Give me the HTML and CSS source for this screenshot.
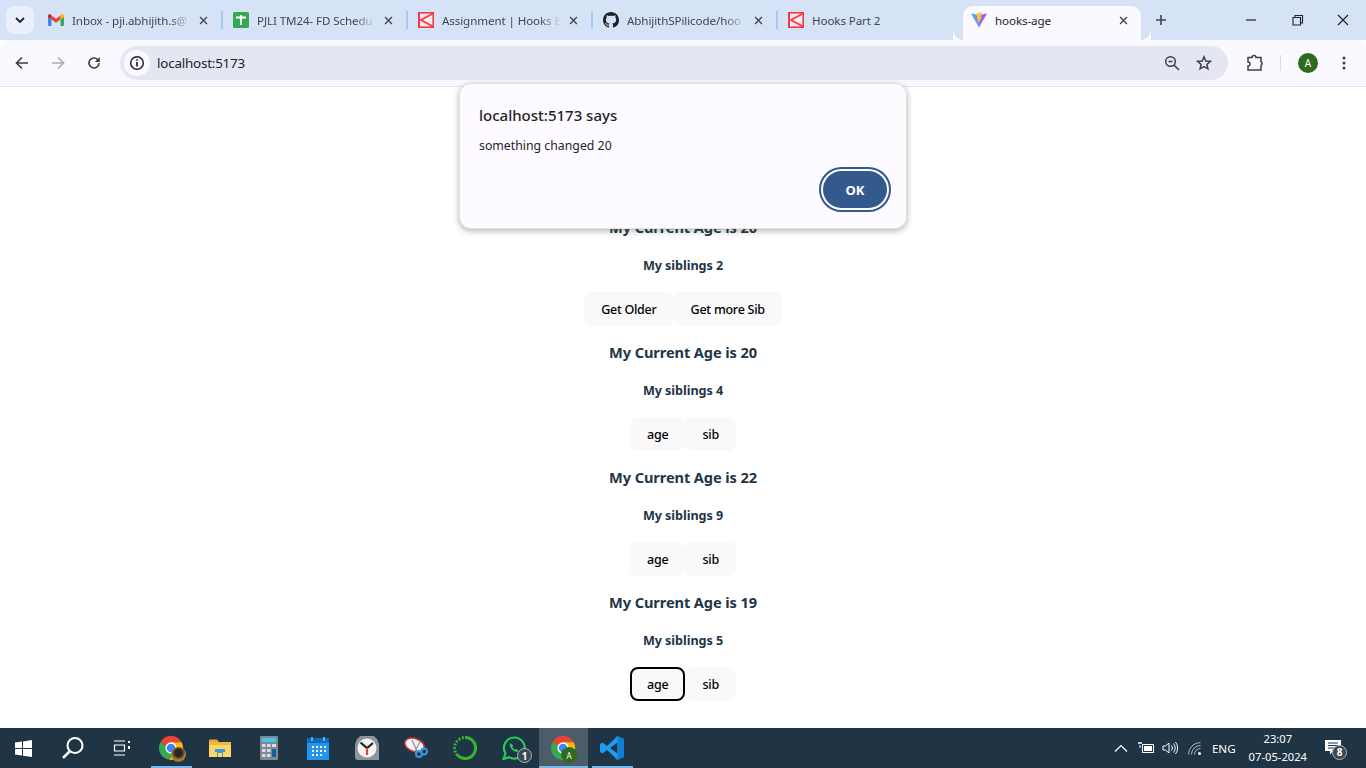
FILE: index.html
```html
<!DOCTYPE html>
<html lang="en">
<head>
<meta charset="utf-8">
<title>hooks-age</title>
<link rel="stylesheet" href="styles.css">
</head>
<body>
<svg class="defs" width="0" height="0" aria-hidden="true">
  <defs>
    <linearGradient id="vitefill" x1="0" y1="0" x2="1" y2="0">
      <stop offset="0" stop-color="#41b8ff"/>
      <stop offset="0.55" stop-color="#8f7cf5"/>
      <stop offset="1" stop-color="#bd34fe"/>
    </linearGradient>
    <symbol id="kicon" viewBox="0 0 16 16">
      <rect x="0.8" y="0.8" width="14.4" height="14.4" fill="#fdeaec" stroke="#f0394a" stroke-width="1.6"/>
      <path d="M15 1.5 3 8l12 6.5" fill="none" stroke="#f0394a" stroke-width="1.8"/>
      <path d="M1 1v14" stroke="#f0394a" stroke-width="2"/>
    </symbol>
    <symbol id="close" viewBox="0 0 10 10">
      <path d="M1.2 1.2l7.6 7.6M8.8 1.2 1.2 8.8" fill="none" stroke="#3f4650" stroke-width="1.5"/>
    </symbol>
    <symbol id="chrome" viewBox="0 0 24 24">
      <path d="M12 12 2.2 6.8A11 11 0 0 1 21.8 6.8H12z" fill="#ea4335"/>
      <path d="M2.2 6.8A11 11 0 0 0 10.5 22.9L15.5 14 12 12z" fill="#34a853"/>
      <path d="M21.8 6.8A11 11 0 0 1 10.5 22.9L15.5 14 12 6.8z" fill="#fbbc05"/>
      <circle cx="12" cy="12" r="5.2" fill="#fff"/>
      <circle cx="12" cy="12" r="4" fill="#4285f4"/>
    </symbol>
  </defs>
</svg>

<header class="tabstrip">
  <button class="tabsearch" type="button" aria-label="Search tabs">
    <svg width="10" height="6" viewBox="0 0 10 6"><path d="M1 1l4 4 4-4" fill="none" stroke="#1f2328" stroke-width="1.8"/></svg>
  </button>
  <div class="tabs">
    <div class="tab">
      <svg class="fav" viewBox="0 0 16 12"><path d="M3.500 5.500V12H1a1 1 0 0 1-1-1V2.500z" fill="#4285f4"/><path d="M12.500 5.500V12H15a1 1 0 0 0 1-1V2.500z" fill="#34a853"/><path d="M12.500 1.500V5.500L16 3V2c0-1.500-1.700-2.200-2.800-1.300z" fill="#fbbc05"/><path d="M3.500 5.500V1.500L8 4.800l4.500-3.300v4L8 8.800z" fill="#ea4335"/><path d="M0 3V2C0 .5 1.700-.2 2.800.7l.7.800v4z" fill="#c5221f"/></svg>
      <span class="tab-title">Inbox - pji.abhijith.s@</span>
      <svg class="tab-close"><use href="#close"/></svg>
    </div>
    <div class="tab">
      <svg class="fav" viewBox="0 0 16 16"><rect width="16" height="16" rx="1.500" fill="#34a853"/><path d="M3 5.500h10M8 3v10" stroke="#fff" stroke-width="1.800" fill="none"/></svg>
      <span class="tab-title">PJLI TM24- FD Schedu</span>
      <svg class="tab-close"><use href="#close"/></svg>
    </div>
    <div class="tab">
      <svg class="fav"><use href="#kicon"/></svg>
      <span class="tab-title">Assignment | Hooks B</span>
      <svg class="tab-close"><use href="#close"/></svg>
    </div>
    <div class="tab">
      <svg class="fav" viewBox="0 0 16 16"><path fill="#1f2328" d="M8 0C3.580 0 0 3.580 0 8c0 3.540 2.290 6.530 5.470 7.590.4.070.55-.17.55-.38 0-.19-.01-.82-.01-1.490-2.010.37-2.530-.49-2.690-.94-.09-.23-.48-.94-.82-1.130-.28-.15-.68-.52-.01-.53.630-.01 1.080.58 1.230.82.720 1.210 1.870.87 2.330.66.070-.52.280-.87.510-1.070-1.780-.2-3.640-.89-3.640-3.950 0-.87.310-1.590.820-2.150-.08-.2-.36-1.020.08-2.120 0 0 .67-.21 2.200.82.640-.18 1.320-.27 2-.27s1.360.09 2 .27c1.530-1.040 2.200-.82 2.200-.82.440 1.100.16 1.920.08 2.120.51.560.82 1.270.82 2.150 0 3.070-1.870 3.750-3.650 3.950.29.250.54.730.54 1.480 0 1.070-.01 1.930-.01 2.200 0 .21.150.46.550.38A8.010 8.010 0 0 0 16 8c0-4.420-3.580-8-8-8z"/></svg>
      <span class="tab-title">AbhijithSPilicode/hoo</span>
      <svg class="tab-close"><use href="#close"/></svg>
    </div>
    <div class="tab tab-plain">
      <svg class="fav"><use href="#kicon"/></svg>
      <span class="tab-title">Hooks Part 2</span>
    </div>
    <div class="tab tab-active">
      <svg class="fav" viewBox="0 0 16 16"><path d="M0 1.500 8 3l8-1.500L8 15.500z" fill="url(#vitefill)"/><path d="M10.500 0 5.500 1.500l1 5-1 .8 1.500.2-.5 4 4.500-6.500-2-.3 2-2.500z" fill="#fdc92e"/></svg>
      <span class="tab-title">hooks-age</span>
      <svg class="tab-close tab-close-dark"><use href="#close"/></svg>
    </div>
    <button class="newtab" type="button" aria-label="New tab">
      <svg width="12" height="12" viewBox="0 0 12 12"><path d="M6 1v10M1 6h10" stroke="#3f4650" stroke-width="1.600" fill="none"/></svg>
    </button>
  </div>
  <div class="winctl">
    <svg width="46" height="12" viewBox="0 0 46 12"><path d="M18 6h10" stroke="#1f2328" stroke-width="1.200"/></svg>
    <svg width="46" height="12" viewBox="0 0 46 12"><path d="M19 3.500h7.500V11H19zM21 3.500V1.500h7.500V9h-2" fill="none" stroke="#1f2328" stroke-width="1.100"/></svg>
    <svg width="46" height="12" viewBox="0 0 46 12"><path d="M18 1l10 10M28 1 18 11" fill="none" stroke="#1f2328" stroke-width="1.200"/></svg>
  </div>
</header>

<nav class="toolbar">
  <div class="navbtns">
    <svg width="14" height="14" viewBox="0 0 14 14"><path d="M13 7H2M7 1.500 1.500 7 7 12.500" fill="none" stroke="#3c4148" stroke-width="1.700"/></svg>
    <svg width="14" height="14" viewBox="0 0 14 14"><path d="M1 7h11M7 1.500 12.500 7 7 12.500" fill="none" stroke="#a9adb5" stroke-width="1.700"/></svg>
    <svg width="14" height="14" viewBox="0 0 14 14"><path d="M12 7a5 5 0 1 1-1.500-3.600L12 5" fill="none" stroke="#3c4148" stroke-width="1.600"/><path d="M12.800 1v5h-5z" fill="#3c4148"/></svg>
  </div>
  <div class="omnibox">
    <span class="siteinfo">
      <svg width="16" height="16" viewBox="0 0 16 16"><circle cx="8" cy="8" r="6.300" fill="none" stroke="#1f2328" stroke-width="1.500"/><path d="M8 7v4.500M8 4.200v1.600" stroke="#1f2328" stroke-width="1.700"/></svg>
    </span>
    <span class="url">localhost:5173</span>
    <span class="omni-actions">
      <svg width="16" height="16" viewBox="0 0 16 16"><circle cx="6.500" cy="6.500" r="4.800" fill="none" stroke="#3c4148" stroke-width="1.500"/><path d="M4.500 6.500h4M10 10l5 5" stroke="#3c4148" stroke-width="1.600" fill="none"/></svg>
      <svg width="16" height="16" viewBox="0 0 16 16"><path d="M8 1.800l1.800 4.200 4.500.4-3.400 3 1 4.400L8 11.500l-3.900 2.300 1-4.400-3.400-3 4.500-.4z" fill="none" stroke="#3c4148" stroke-width="1.500"/></svg>
    </span>
  </div>
  <div class="tool-right">
    <svg width="18" height="18" viewBox="0 0 18 18"><path d="M2 3.500h4a2 2 0 0 1 4 0h5v4.200a2 2 0 0 1 0 3.600V16H2v-4a2 2 0 0 0 0-4z" fill="none" stroke="#3c4148" stroke-width="1.500"/></svg>
    <span class="tool-sep"></span>
    <span class="avatar">A</span>
    <svg width="4" height="14" viewBox="0 0 4 14"><circle cx="2" cy="2" r="1.500" fill="#3c4148"/><circle cx="2" cy="7" r="1.500" fill="#3c4148"/><circle cx="2" cy="12" r="1.500" fill="#3c4148"/></svg>
  </div>
</nav>

<main class="page">
  <section class="block">
    <h3 class="age">My Current Age is 20</h3>
    <p class="sib">My siblings 2</p>
    <div class="btns"><button class="btn" type="button">Get Older</button><button class="btn" type="button">Get more Sib</button></div>
  </section>
  <section class="block">
    <h3 class="age">My Current Age is 20</h3>
    <p class="sib">My siblings 4</p>
    <div class="btns"><button class="btn" type="button">age</button><button class="btn" type="button">sib</button></div>
  </section>
  <section class="block">
    <h3 class="age">My Current Age is 22</h3>
    <p class="sib">My siblings 9</p>
    <div class="btns"><button class="btn" type="button">age</button><button class="btn" type="button">sib</button></div>
  </section>
  <section class="block">
    <h3 class="age">My Current Age is 19</h3>
    <p class="sib">My siblings 5</p>
    <div class="btns"><button class="btn btn-focus" type="button">age</button><button class="btn" type="button">sib</button></div>
  </section>
</main>

<div class="dialog" role="alertdialog">
  <div class="dlg-title">localhost:5173 says</div>
  <div class="dlg-msg">something changed 20</div>
  <div class="dlg-actions"><button class="dlg-ok" type="button">OK</button></div>
</div>

<footer class="taskbar">
  <div class="tb-left">
    <span class="slot"><svg width="17" height="17" viewBox="0 0 17 17"><path d="M0 2.500 7 1.500V8H0zM8 1.400 17 0v8H8zM0 9h7v6.500L0 14.500zM8 9h9v8l-9-1.300z" fill="#fff"/></svg></span>
    <span class="slot"><svg width="24" height="24" viewBox="0 0 24 24"><circle cx="14" cy="9.500" r="7.500" fill="none" stroke="#fff" stroke-width="2"/><path d="M9 15 2 22" stroke="#fff" stroke-width="2.500"/></svg></span>
    <span class="slot"><svg width="18" height="16" viewBox="0 0 18 16"><path d="M1 1h11M1 15h11M1.500 5h10v6h-10z" fill="none" stroke="#fff" stroke-width="1.200"/><path d="M15 1h2v2h-2zM15 6h2v3h-2z" fill="#fff"/></svg></span>
    <span class="slot slot-open">
      <svg width="26" height="26"><use href="#chrome"/></svg>
      <span class="photo"></span>
    </span>
    <span class="slot"><svg width="22" height="18" viewBox="0 0 22 18"><path d="M0 1.500A1 1 0 0 1 1 .5h7l2 2.500H0z" fill="#e8a93a"/><rect y="3" width="22" height="15" fill="#fbd568"/><rect y="3" width="22" height="3" fill="#f0b93f"/><path d="M6 10h10v3h-2v5H8v-5H6z" fill="#3b9bdc"/><rect x="9" y="14" width="4" height="4" fill="#fbd568"/></svg></span>
    <span class="slot"><svg width="18" height="24" viewBox="0 0 18 24"><rect width="18" height="24" rx="1" fill="#7d8a93"/><rect x="2" y="2" width="14" height="4" fill="#4fc3e8"/><g fill="#d6dce0"><rect x="2" y="8" width="3.500" height="3"/><rect x="7" y="8" width="3.500" height="3"/><rect x="2" y="13" width="3.500" height="3"/><rect x="7" y="13" width="3.500" height="3"/><rect x="2" y="18" width="3.500" height="3"/><rect x="7" y="18" width="3.500" height="3"/><rect x="12" y="8" width="4" height="3"/></g><rect x="12" y="13" width="4" height="8" fill="#1d5a9e"/></svg></span>
    <span class="slot"><svg width="22" height="23" viewBox="0 0 22 23"><rect y="1" width="22" height="22" rx="1" fill="#2196f0"/><rect y="1" width="22" height="5" fill="#0f6cbf"/><path d="M5 0v4M17 0v4" stroke="#7cc4f7" stroke-width="1.500"/><g fill="#fff"><rect x="5" y="9" width="2" height="2"/><rect x="9" y="9" width="2" height="2"/><rect x="13" y="9" width="2" height="2"/><rect x="17" y="9" width="2" height="2"/><rect x="5" y="13" width="2" height="2"/><rect x="9" y="13" width="2" height="2"/><rect x="13" y="13" width="2" height="2"/><rect x="17" y="13" width="2" height="2"/><rect x="5" y="17" width="2" height="2"/><rect x="9" y="17" width="2" height="2"/><rect x="13" y="17" width="2" height="2"/></g></svg></span>
    <span class="slot"><svg width="24" height="24" viewBox="0 0 24 24"><path d="M0 10a12 12 0 0 1 24 0v14H3a3 3 0 0 1-3-3z" fill="#8f9499"/><circle cx="12" cy="12" r="9.500" fill="#f4f4f4"/><path d="M5.500 6.500 12 12l6-5" fill="none" stroke="#222" stroke-width="2.200"/><path d="M12 12v7" stroke="#e0492f" stroke-width="2.200"/></svg></span>
    <span class="slot"><svg width="24" height="22" viewBox="0 0 24 22"><ellipse cx="10.500" cy="8" rx="10" ry="6.500" fill="#f4f4f4" stroke="#c4343e" stroke-width="1.600" transform="rotate(20 10.500 8)"/><path d="M8 3l5 11M16 5 11 14" stroke="#8a9198" stroke-width="1.200"/><circle cx="15" cy="17" r="3" fill="none" stroke="#2f9be8" stroke-width="2"/><circle cx="20" cy="14.500" r="3" fill="none" stroke="#2f9be8" stroke-width="2"/></svg></span>
    <span class="slot"><svg width="24" height="24" viewBox="0 0 24 24"><path d="M12 1.500a10.500 10.500 0 1 1-7.500 17.800" fill="none" stroke="#35b52e" stroke-width="3"/><path d="M4.500 19.300A10.500 10.500 0 0 1 12 1.500" fill="none" stroke="#35b52e" stroke-width="3" stroke-dasharray="2 1.500"/></svg></span>
    <span class="slot">
      <svg width="24" height="24" viewBox="0 0 24 24"><path d="M12.500 1.500A10.500 10.500 0 0 0 3.500 17.500L1.500 23l5.700-1.800A10.500 10.500 0 1 0 12.500 1.500z" fill="none" stroke="#22cc5e" stroke-width="2.200"/><path d="M8.500 7c-1.500 1.500-1 4 1.500 6.500s5 3 6.500 1.500l-2-2.200-1.500.8c-1-.5-2-1.500-2.600-2.600l.8-1.500z" fill="#22cc5e"/></svg>
      <span class="count count-wa">1</span>
    </span>
    <span class="slot slot-active">
      <svg width="26" height="26"><use href="#chrome"/></svg>
      <span class="profile">A</span>
    </span>
    <span class="slot slot-open slot-code"><svg width="24" height="24" viewBox="0 0 24 24"><path d="M17.500 0 24 3v18l-6.500 3L7 14l-4.500 3.500L0 16v-8l2.500-1.500L7 10z" fill="#1f9cf0"/><path d="M17.500 6.500 10 12l7.500 5.500z" fill="#1f3444"/><path d="M17.500 0 24 3v18l-6.500 3z" fill="#0e7fd1"/></svg></span>
  </div>
  <div class="tb-right">
    <svg width="14" height="8" viewBox="0 0 14 8"><path d="M1 7.500 7 1.500l6 6" fill="none" stroke="#fff" stroke-width="1.200"/></svg>
    <svg width="16" height="12" viewBox="0 0 16 12"><rect x="4.500" y="2.500" width="11" height="8" fill="none" stroke="#fff"/><rect x="6" y="4" width="8" height="5" fill="#fff"/><path d="M0 1h4M1 0v2M3 0v2M2 3v3" stroke="#fff"/></svg>
    <svg width="16" height="14" viewBox="0 0 16 14"><path d="M1 5h2.500L7 2v10L3.500 9H1zM9.500 4.500a4 4 0 0 1 0 5M11.500 2.500a7 7 0 0 1 0 9M13.500 1a9.500 9.500 0 0 1 0 12" fill="none" stroke="#fff"/></svg>
    <svg width="14" height="13" viewBox="0 0 14 13"><path d="M.5 12.500a12 12 0 0 1 12-12M3.500 12.500a9 9 0 0 1 9-9M6.500 12.500a6 6 0 0 1 6-6" fill="none" stroke="#aeb6bc"/><circle cx="11.500" cy="11.500" r="1.500" fill="#fff"/></svg>
    <span class="lang">ENG</span>
    <span class="clock"><span>23:07</span><span>07-05-2024</span></span>
    <span class="notif">
      <svg width="16" height="15" viewBox="0 0 16 15"><path d="M0 0h16v11H8l-3 3.500V11H0z" fill="#fff"/><path d="M3 3h10M3 5.500h10M3 8h7" stroke="#1f3444"/></svg>
      <span class="count count-notif">8</span>
    </span>
  </div>
</footer>
</body>
</html>
```
FILE: styles.css
```css
* { box-sizing: border-box; }
html, body { margin: 0; height: 100%; }
body {
  width: 1366px;
  height: 768px;
  overflow: hidden;
  display: flex;
  flex-direction: column;
  position: relative;
  background: #fff;
  font-family: "Noto Sans", "Open Sans", sans-serif;
  color: #213547;
}
.defs { position: absolute; }
button { font-family: inherit; }

/* tab strip */
.tabstrip {
  height: 40px;
  flex: none;
  background: #d6e3f7;
  display: flex;
  align-items: flex-start;
  padding: 6px 0 0 6px;
  position: relative;
}
.tabsearch {
  width: 28px;
  height: 28px;
  border: 0;
  border-radius: 8px;
  background: #eaf0fb;
  display: flex;
  align-items: center;
  justify-content: center;
  padding: 0;
  flex: none;
}
.tabs { display: flex; align-items: flex-start; margin-left: 6px; flex: 1; min-width: 0; }
.tab {
  width: 185px;
  height: 34px;
  flex: none;
  display: flex;
  align-items: center;
  padding: 0 12px 6px 8px;
  position: relative;
  font-size: 11.6px;
  letter-spacing: -0.1px;
  color: #40464f;
}
.tab:not(.tab-plain):not(.tab-active)::after {
  content: "";
  position: absolute;
  right: 2px;
  top: 5px;
  width: 2px;
  height: 18px;
  background: #a8c7f5;
}
.fav { width: 16px; height: 16px; flex: none; margin-right: 8px; }
.tab:first-child .fav { height: 12px; }
.tab-title {
  flex: 1;
  min-width: 0;
  white-space: nowrap;
  overflow: hidden;
  -webkit-mask-image: linear-gradient(to right, #000 82%, transparent 100%);
  mask-image: linear-gradient(to right, #000 82%, transparent 100%);
}
.tab-close { width: 9px; height: 9px; flex: none; margin-left: 8px; margin-right: 5px; }
.tab-plain { width: 183px; }
.tab-plain .tab-title { -webkit-mask-image: none; mask-image: none; }
.tab-active {
  width: 178px;
  background: #f9f9ff;
  border-radius: 10px 10px 0 0;
  color: #1f2328;
  padding: 0 8px 6px 8px;
  position: relative;
}
.tab-active .tab-title { -webkit-mask-image: none; mask-image: none; }
.tab-active::before,
.tab-active::after {
  content: "";
  position: absolute;
  bottom: 0;
  width: 10px;
  height: 10px;
  background: radial-gradient(circle at 0 0, #d6e3f7 9.500px, #f9f9ff 10px);
}
.tab-active::after { left: 100%; }
.tab-active::before {
  right: 100%;
  background: radial-gradient(circle at 100% 0, #d6e3f7 9.500px, #f9f9ff 10px);
}
.newtab {
  width: 28px;
  height: 28px;
  margin-left: 6px;
  border: 0;
  background: transparent;
  padding: 0;
  display: flex;
  align-items: center;
  justify-content: center;
}
.winctl { position: absolute; right: 0; top: 14px; display: flex; }
.winctl svg { display: block; }

/* toolbar */
.toolbar {
  height: 47px;
  flex: none;
  background: #f9f9ff;
  border-bottom: 1px solid #e3e5ee;
  display: flex;
  align-items: center;
  padding: 0 0 1px 15px;
  border-radius: 8px 8px 0 0;
}
.navbtns { display: flex; gap: 22px; width: 105px; flex: none; }
.omnibox {
  width: 1108px;
  height: 34px;
  flex: none;
  border-radius: 17px;
  background: #e4e7f2;
  display: flex;
  align-items: center;
  padding: 0 16px 0 4px;
}
.siteinfo {
  width: 26px;
  height: 26px;
  border-radius: 50%;
  background: #f9f9ff;
  display: flex;
  align-items: center;
  justify-content: center;
  flex: none;
}
.url { font-size: 13.4px; letter-spacing: -0.2px; color: #1f2328; margin-left: 7px; flex: 1; }
.omni-actions { display: flex; gap: 16px; align-items: center; }
.tool-right { display: flex; align-items: center; margin-left: 18px; }
.tool-sep { width: 1px; height: 16px; background: #cfdcf2; margin: 0 17px 0 16px; }
.avatar {
  width: 20px;
  height: 20px;
  border-radius: 50%;
  background: #2e6b1f;
  color: #fff;
  font-size: 10px;
  display: flex;
  align-items: center;
  justify-content: center;
  margin-right: 24px;
}

/* page */
.page {
  flex: 1;
  min-height: 0;
  padding-top: 129px;
  display: flex;
  flex-direction: column;
  align-items: center;
  text-align: center;
}
.block { height: 125px; flex: none; }
.age { margin: 0 0 15px; font-size: 14.6px; letter-spacing: -0.1px; line-height: 23px; font-weight: 700; }
.sib { margin: 0 0 14px; font-size: 12.6px; letter-spacing: -0.05px; line-height: 24px; font-weight: 700; }
.btns { display: flex; justify-content: center; }
.btn {
  height: 34px;
  padding: 0 16px;
  font-size: 12.5px;
  letter-spacing: -0.25px;
  font-weight: 500;
  color: #000;
  background: #f9f9f9;
  border: 1px solid transparent;
  border-radius: 8px;
}
.btn-focus { border: 2px solid #000; padding: 0 15px; }

/* dialog */
.dialog {
  position: absolute;
  left: 459px;
  top: 83px;
  width: 448px;
  height: 146px;
  background: #fdfbff;
  border-radius: 12px;
  border: 1px solid #dfe3dd;
  box-shadow: 0 2px 6px rgba(60, 70, 60, .4);
  padding: 20px 17px 0 19px;
}
.dlg-title { font-size: 15px; line-height: 22px; font-weight: 500; color: #1f2328; }
.dlg-msg { font-size: 12.3px; line-height: 18px; margin-top: 11px; color: #1f2328; }
.dlg-actions { display: flex; justify-content: flex-end; margin-top: 16px; }
.dlg-ok {
  width: 64px;
  height: 37px;
  border: 0;
  border-radius: 19px;
  background: #34598c;
  color: #fff;
  font-size: 13px;
  font-weight: 700;
  outline: 2px solid #34598c;
  outline-offset: 2px;
  margin-right: 2px;
}

/* taskbar */
.taskbar {
  height: 40px;
  flex: none;
  background: #1f3444;
  display: flex;
  justify-content: space-between;
  color: #fff;
}
.tb-left { display: flex; }
.slot {
  width: 49px;
  height: 40px;
  display: flex;
  align-items: center;
  justify-content: center;
  position: relative;
  flex: none;
}
.slot > svg { margin-right: 2px; }
.slot-open::after {
  content: "";
  position: absolute;
  left: 4px;
  right: 4px;
  bottom: 0;
  height: 2px;
  background: #76b9ed;
}
.slot-active { background: #4c5d69; }
.slot-active::after {
  content: "";
  position: absolute;
  left: 0;
  right: 0;
  bottom: 0;
  height: 2px;
  background: #76b9ed;
}
.photo {
  position: absolute;
  left: 24px;
  top: 19px;
  width: 15px;
  height: 15px;
  border-radius: 50%;
  background: radial-gradient(circle at 50% 40%, #2c2320 30%, #a8823c 60%, #6b4b2a 100%);
}
.profile {
  position: absolute;
  left: 22px;
  top: 19px;
  width: 16px;
  height: 16px;
  border-radius: 50%;
  background: #2e6b1f;
  font-size: 8px;
  display: flex;
  align-items: center;
  justify-content: center;
}
.count {
  position: absolute;
  border-radius: 50%;
  background: #3b4854;
  border: 1px solid #aeb6bc;
  display: flex;
  align-items: center;
  justify-content: center;
  font-weight: 700;
  font-size: 10px;
  width: 15px;
  height: 15px;
}
.count-wa { left: 27px; top: 20px; }
.tb-right { display: flex; align-items: center; padding-right: 25px; }
.tb-right > svg:nth-child(1) { margin-right: 10px; }
.tb-right > svg:nth-child(2) { margin-right: 8px; }
.tb-right > svg:nth-child(3) { margin-right: 10px; }
.lang { font-size: 11.6px; margin-left: 10px; }
.clock {
  display: flex;
  flex-direction: column;
  align-items: center;
  font-size: 11.2px;
  line-height: 18px;
  margin-left: 13px;
}
.notif { position: relative; display: flex; margin-left: 18px; margin-bottom: 2px; }
.count-notif { left: 7px; top: 5px; }
```
